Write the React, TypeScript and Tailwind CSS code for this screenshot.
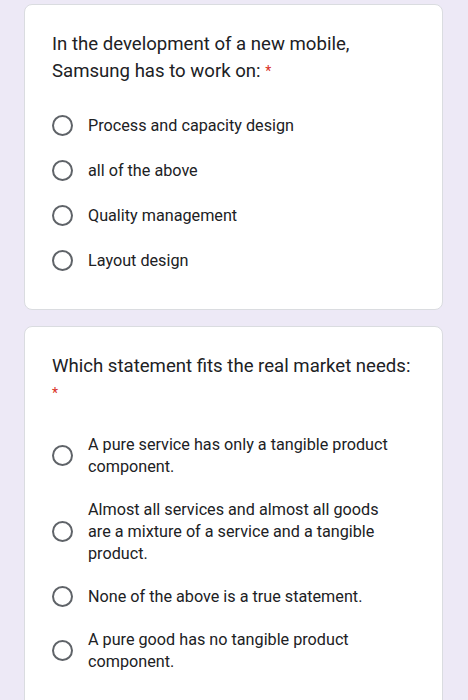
const questions = [
  {
    title: ["In the development of a new mobile,", "Samsung has to work on: "],
    rowPad: "py-[11.5px]",
    gap: "mt-[18px]",
    options: [
      ["Process and capacity design"],
      ["all of the above"],
      ["Quality management"],
      ["Layout design"],
    ],
  },
  {
    title: ["Which statement fits the real market needs:", ""],
    rowPad: "py-[10.5px]",
    gap: "mt-[16px]",
    options: [
      ["A pure service has only a tangible product", "component."],
      [
        "Almost all services and almost all goods",
        "are a mixture of a service and a tangible",
        "product.",
      ],
      ["None of the above is a true statement."],
      ["A pure good has no tangible product", "component."],
    ],
  },
];

const Radio = () => (
  <span className="block w-[21px] h-[21px] shrink-0 rounded-full border-2 border-[#5f6368]" />
);

const App = () => {
  return (
    <div
      className="min-h-screen bg-[#ede9f6] pl-[24px] pr-[25px] pt-[4px] pb-4 flex flex-col gap-[16px]"
      style={{ fontFamily: "Roboto, 'Noto Sans', sans-serif" }}
    >
      {questions.map((q, i) => (
        <div
          key={i}
          className="bg-white rounded-lg border border-[#dadce0] pl-[27px] pr-[20px] pt-[26px] pb-[26px]"
        >
          <div className="text-[18.6px] leading-[27px] text-[#202124] whitespace-nowrap">
            {q.title[0]}
            <br />
            {q.title[1]}
            <span className="text-[#d93025] text-[14px] leading-[27px] align-top">*</span>
          </div>
          <div className={q.gap}>
            {q.options.map((opt) => (
              <div key={opt[0]} className={`flex items-center gap-[15px] ${q.rowPad}`}>
                <Radio />
                <span className="text-[16.2px] leading-[22px] text-[#202124] whitespace-nowrap">
                  {opt.map((line, j) => (
                    <span key={j} className="block">
                      {line}
                    </span>
                  ))}
                </span>
              </div>
            ))}
          </div>
        </div>
      ))}
    </div>
  );
};

export default App;
